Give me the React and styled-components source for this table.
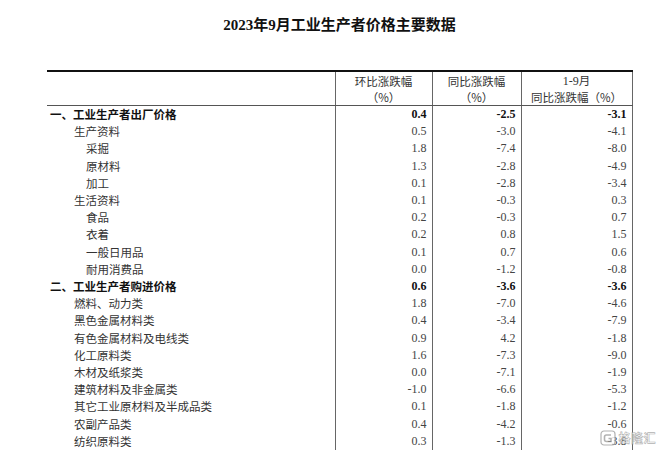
import React from "react";
import styled, { createGlobalStyle } from "styled-components";

const GlobalStyle = createGlobalStyle`
  html, body {
    margin: 0;
    padding: 0;
    background: #fff;
  }
  body {
    font-family: "Liberation Serif", "Noto Sans CJK SC", serif;
    color: #222;
  }
`;

const Page = styled.div`
  position: relative;
  width: 660px;
  height: 450px;
  overflow: hidden;
  background: #fff;
`;

const Title = styled.h1`
  margin: 0;
  padding-top: 15px;
  width: 585px;
  margin-left: 47px;
  text-align: center;
  font-family: "Liberation Serif", "Noto Sans CJK SC", serif;
  font-size: 15px;
  line-height: 20px;
  font-weight: bold;
  color: #111;
`;

const Table = styled.table`
  margin-top: 35px;
  margin-left: 47px;
  width: 585px;
  border-collapse: collapse;
  table-layout: fixed;
  border-top: 2px solid #111;
`;

const HeadCell = styled.th`
  height: 33px;
  padding: 0;
  border-bottom: 1px solid #555;
  border-right: ${(p) => (p.$first ? "1px solid #666" : "1px solid #666")};
  font-family: "Noto Sans CJK SC", sans-serif;
  font-weight: normal;
  font-size: 11.5px;
  line-height: 16px;
  color: #333;
  text-align: center;
  vertical-align: middle;

  .num {
    font-family: "Liberation Serif", serif;
    font-size: 12px;
  }
`;

const Row = styled.tr`
  height: 17.2px;
`;

const Label = styled.td`
  padding: 0 0 0 ${(p) => 3 + p.$level * 12 + (p.$level > 0 ? 12 : 0)}px;
  height: 17.2px;
  border-right: 1px solid #666;
  font-family: "Noto Sans CJK SC", sans-serif;
  font-size: 11.5px;
  line-height: 17.2px;
  font-weight: ${(p) => (p.$bold ? "bold" : "normal")};
  color: ${(p) => (p.$bold ? "#111" : "#333")};
  white-space: nowrap;
`;

const Num = styled.td`
  padding: 0 5px 0 0;
  height: 17.2px;
  border-right: 1px solid #666;
  text-align: right;
  font-family: "Liberation Serif", serif;
  font-size: 12px;
  line-height: 17.2px;
  font-weight: ${(p) => (p.$bold ? "bold" : "normal")};
  color: ${(p) => (p.$bold ? "#111" : "#444")};
`;

const Watermark = styled.div`
  position: absolute;
  right: 4px;
  bottom: 4px;
  display: flex;
  align-items: center;
  gap: 2px;
  opacity: 0.75;
`;

const MarkText = styled.span`
  font-family: "Noto Sans CJK SC", sans-serif;
  font-size: 12px;
  font-weight: bold;
  color: #fff;
  -webkit-text-stroke: 0.6px #999;
  letter-spacing: 0.5px;
`;

const rows = [
  ["一、工业生产者出厂价格", 0, true, "0.4", "-2.5", "-3.1"],
  ["生产资料", 1, false, "0.5", "-3.0", "-4.1"],
  ["采掘", 2, false, "1.8", "-7.4", "-8.0"],
  ["原材料", 2, false, "1.3", "-2.8", "-4.9"],
  ["加工", 2, false, "0.1", "-2.8", "-3.4"],
  ["生活资料", 1, false, "0.1", "-0.3", "0.3"],
  ["食品", 2, false, "0.2", "-0.3", "0.7"],
  ["衣着", 2, false, "0.2", "0.8", "1.5"],
  ["一般日用品", 2, false, "0.1", "0.7", "0.6"],
  ["耐用消费品", 2, false, "0.0", "-1.2", "-0.8"],
  ["二、工业生产者购进价格", 0, true, "0.6", "-3.6", "-3.6"],
  ["燃料、动力类", 1, false, "1.8", "-7.0", "-4.6"],
  ["黑色金属材料类", 1, false, "0.4", "-3.4", "-7.9"],
  ["有色金属材料及电线类", 1, false, "0.9", "4.2", "-1.8"],
  ["化工原料类", 1, false, "1.6", "-7.3", "-9.0"],
  ["木材及纸浆类", 1, false, "0.0", "-7.1", "-1.9"],
  ["建筑材料及非金属类", 1, false, "-1.0", "-6.6", "-5.3"],
  ["其它工业原材料及半成品类", 1, false, "0.1", "-1.8", "-1.2"],
  ["农副产品类", 1, false, "0.4", "-4.2", "-0.6"],
  ["纺织原料类", 1, false, "0.3", "-1.3", "-3.8"],
];

function LogoIcon() {
  return (
    <svg width="16" height="16" viewBox="0 0 16 16">
      <rect x="1" y="1" width="14" height="14" rx="3" fill="#fff" stroke="#999" strokeWidth="1.2" />
      <path d="M11 5 H6.5 A2 2 0 0 0 4.5 7 V9.5 A2 2 0 0 0 6.5 11.5 H11 V8.5 H8.5" fill="none" stroke="#999" strokeWidth="1.6" />
    </svg>
  );
}

export default function App() {
  return (
    <Page>
      <GlobalStyle />
      <Title>2023年9月工业生产者价格主要数据</Title>
      <Table>
        <colgroup>
          <col style={{ width: 288 }} />
          <col style={{ width: 97 }} />
          <col style={{ width: 89 }} />
          <col style={{ width: 111 }} />
        </colgroup>
        <thead>
          <tr>
            <HeadCell $first />
            <HeadCell>环比涨跌幅<br />（%）</HeadCell>
            <HeadCell>同比涨跌幅<br />（%）</HeadCell>
            <HeadCell><span className="num">1-9</span>月<br />同比涨跌幅（%）</HeadCell>
          </tr>
        </thead>
        <tbody>
          {rows.map(([name, level, bold, a, b, c]) => (
            <Row key={name}>
              <Label $level={level} $bold={bold}>{name}</Label>
              <Num $bold={bold}>{a}</Num>
              <Num $bold={bold}>{b}</Num>
              <Num $bold={bold}>{c}</Num>
            </Row>
          ))}
        </tbody>
      </Table>
      <Watermark>
        <LogoIcon />
        <MarkText>格隆汇</MarkText>
      </Watermark>
    </Page>
  );
}
